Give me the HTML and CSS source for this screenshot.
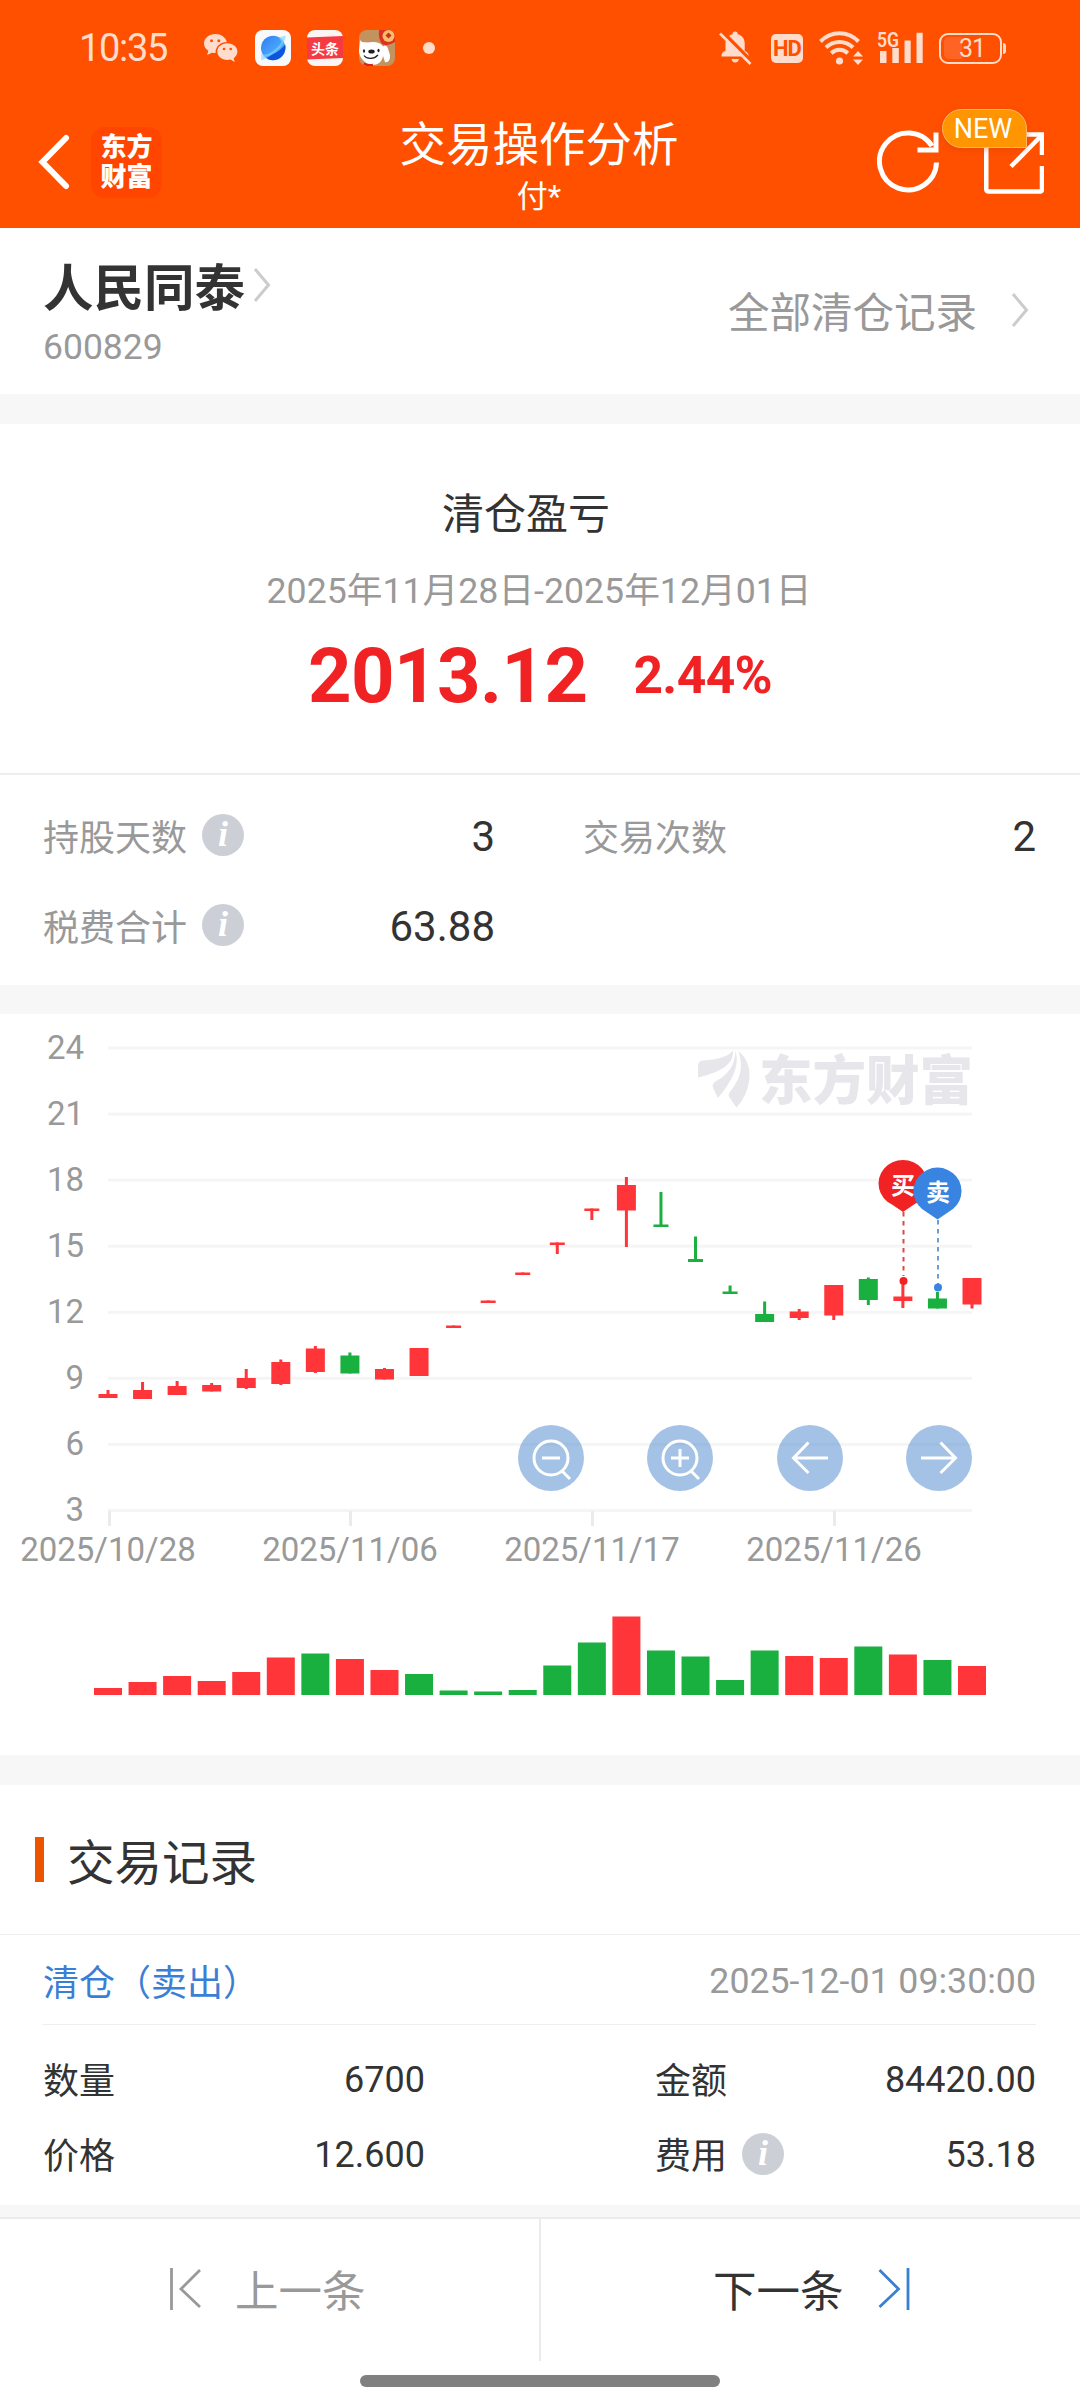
FILE: index.html
```html
<!DOCTYPE html>
<html lang="zh-CN">
<head>
    <meta charset="UTF-8">
    <meta name="viewport" content="width=device-width, initial-scale=1.0">
    <title>交易操作分析</title>
    <link rel="stylesheet" href="styles.css">
</head>
<body>

    <header class="header">
        <!-- Status bar -->
        <div class="status-bar">
            <span class="clock">10:35</span>
            <svg class="wechat" width="34" height="30" viewBox="0 0 34 30">
                <path class="tint" d="M11.500 1C5 1 0 5.200 0 10.500c0 3 1.700 5.600 4.300 7.300L3.200 22l4.600-2.300c1.200.3 2.400.4 3.700.4C11.400 13 16.500 9.200 22.800 9 21.700 4.300 17 1 11.500 1z"/>
                <path class="tint" d="M23.300 10.300c-5.600 0-10 3.600-10 8.300s4.400 8.300 10 8.300c1.200 0 2.300-.2 3.300-.5l4.100 2.500-1-3.700c2.300-1.500 3.700-3.900 3.700-6.600 0-4.700-4.500-8.300-10.100-8.300z"/>
                <g fill="#ff5000"><circle cx="7.500" cy="7.700" r="1.500"/><circle cx="14.800" cy="7.700" r="1.500"/><circle cx="20" cy="16" r="1.300"/><circle cx="26.700" cy="16" r="1.300"/></g>
            </svg>
            <svg class="app-icon" width="36" height="36" viewBox="0 0 36 36">
                <defs>
                    <linearGradient id="sky" x1="0" y1="0" x2="1" y2="1"><stop offset="0" stop-color="#2f7bf5"/><stop offset="1" stop-color="#5cc4ff"/></linearGradient>
                </defs>
                <rect width="36" height="36" rx="8" fill="#f8f9fb"/>
                <circle cx="18.200" cy="18" r="12.200" fill="url(#sky)"/>
                <path d="M30.300 14.500c1.500 8-4 15.700-12 15.700-4 0-6.500-1.500-8.300-3.400C18 25.500 26 20 30.300 14.500z" fill="#0d55de"/>
                <path d="M24 7.500 30.500 5.500c.3 8-10 19.500-24 24.700l-.5-7C8 28 22 21 26.500 12z" fill="#7fd4ff" opacity=".65"/>
            </svg>
            <svg class="app-icon" width="36" height="36" viewBox="0 0 36 36">
                <rect width="36" height="36" rx="8" fill="#fdf5f4"/>
                <path d="M0 7.500 36 6v22L0 29.500z" fill="#f53a43"/>
                <text x="18" y="23.500" class="toutiao-text">头条</text>
            </svg>
            <svg class="app-icon" width="36" height="36" viewBox="0 0 36 36">
                <rect width="36" height="36" rx="8" fill="#c2925f"/>
                <path d="M1 10c2 3 4 2 7 2.500 6-1 13-1 16 4 4-3 5 2 7 8.500.5 5-2 8-5 7l-2-6c-1 6-5 9-11 9-7-.500-13-8-13-14z" fill="#fff"/>
                <ellipse cx="12.500" cy="21.500" rx="3.200" ry="2" fill="#222"/>
                <ellipse cx="5" cy="21" rx="1.100" ry="1.800" fill="#222"/>
                <ellipse cx="19.500" cy="20.500" rx="1.100" ry="1.800" fill="#222"/>
                <path d="M5 25.500c3 4 10 4 14-.500" fill="none" stroke="#222" stroke-width="1.200"/>
                <path d="M5 33.500q4 2.500 9 1.500" fill="none" stroke="#d8261c" stroke-width="2.500"/>
                <path d="M20 0h8q8 0 8 8v4q-8 5-13 2-4-6-3-14z" fill="#e0301e"/>
                <circle cx="29.500" cy="6" r="6" fill="#f7bd6b"/>
                <path d="m29.500 2.500 3 3-3 3-3-3z" fill="#c8321e"/>
            </svg>
            <span class="more-dot"></span>

            <div class="status-right">
                <svg width="33" height="34" viewBox="0 0 33 34">
                    <path class="tint" d="M13.500 3.200a2.600 2.600 0 0 1 5.200 0c4.500 1.200 7 4.600 7 9.300v7.500c2.500 1 4 2.500 4 5.500H2.500c-.2-3.200 1.500-4.700 4-5.700V12.500c0-4.700 2.500-8.100 7-9.300zM12.500 28h7.500q-1 3.500-3.800 3.500T12.500 28z"/>
                    <path d="M3 .500 33 31" stroke="#ff5000" stroke-width="4"/>
                    <path d="M1 2.500 31.500 33" stroke="#ffdccc" stroke-width="2.600"/>
                </svg>
                <span class="hd">HD</span>
                <svg class="wifi" width="45" height="34" viewBox="0 0 45 34">
                    <g fill="none" stroke="#ffdccc" stroke-width="4">
                        <path d="M1.500 10.500C12-.500 29-.500 39.500 10.500"/>
                        <path d="M7 16.500c7.500-7.500 19.500-7.500 27 0"/>
                        <path d="M12.200 22.300c4.800-4.600 11.800-4.600 16.600 0"/>
                    </g>
                    <circle class="tint" cx="20.500" cy="30" r="3.600"/>
                    <path class="tint" d="M34 25.500 39 20l5 5.500zM34 28.500h10L39 34z"/>
                </svg>
                <svg class="signal" width="46" height="34" viewBox="0 0 46 34">
                    <text x="0" y="15.500" class="net-text" textLength="22" lengthAdjust="spacingAndGlyphs">5G</text>
                    <path class="tint" d="M3 20h6.500v12H3zM15.300 17h6.500v15h-6.500zM27.500 9.500h6.200V32h-6.200zM39.500 1.700h6.200V32h-6.200z"/>
                </svg>
                <span class="battery"><span class="battery-level"></span><span class="battery-text">31</span></span>
                <span class="battery-cap"></span>
            </div>
        </div>

        <!-- Title bar -->
        <div class="title-bar">
            <div class="title-left">
                <svg width="32" height="56" viewBox="0 0 32 56"><path d="M28 4 4.500 28 28 52" fill="none" stroke="#fff" stroke-width="6" stroke-linecap="round"/></svg>
                <div class="logo">东方<br>财富</div>
            </div>
            <div class="title-center">
                <h1>交易操作分析</h1>
                <p>付*</p>
            </div>
            <div class="title-right">
                <svg width="64" height="66" viewBox="0 0 64 66" fill="none" stroke="#fff" stroke-width="5">
                    <path d="M59.500 33.500A28.500 28.500 0 1 1 55 17"/>
                    <path d="M59 3.500v17.500H40.500"/>
                </svg>
                <div class="share">
                    <svg width="60" height="66" viewBox="0 0 60 66" fill="none" stroke="#fff" stroke-width="4.500">
                        <path d="M2.250 4.500V60q0 2.500 2.500 2.500H55.500q2.500 0 2.500-2.500V37"/>
                        <path d="M36 5.500h22V26"/>
                        <path d="M27 37.500 57 7"/>
                    </svg>
                    <span class="new-badge">NEW</span>
                </div>
            </div>
        </div>
    </header>

    <!-- Stock -->
    <section class="stock">
        <div>
            <div class="stock-name">人民同泰
                <svg width="18" height="36" viewBox="0 0 18 36"><path d="M2 2l13.500 16L2 34" fill="none" stroke="#ccc" stroke-width="3"/></svg>
            </div>
            <div class="stock-code">600829</div>
        </div>
        <div class="all-records">全部清仓记录
            <svg width="18" height="36" viewBox="0 0 18 36"><path d="M2 2l13.500 16L2 34" fill="none" stroke="#ccc" stroke-width="3"/></svg>
        </div>
    </section>

    <!-- Profit -->
    <section class="profit">
        <h2>清仓盈亏</h2>
        <p class="period">2025年11月28日-2025年12月01日</p>
        <div class="amounts">
            <span class="amount">2013.12</span>
            <span class="percent">2.44%</span>
        </div>
    </section>

    <section class="stats">
        <div class="stat"><span>持股天数</span><i class="info">i</i><b>3</b></div>
        <div class="stat"><span>交易次数</span><b>2</b></div>
        <div class="stat"><span>税费合计</span><i class="info">i</i><b>63.88</b></div>
    </section>

    <!-- K-line and volume, bars are added by script.js -->
    <section class="chart">
        <svg id="chart" width="1080" height="741" viewBox="0 14 1080 741">
            <g id="grid"></g>
            <g class="watermark">
                <path d="M698 66q0-5 5-5.500c14-1 24-3 30-10 .500 11-6 20-35 27z"/>
                <path d="M735.500 51c5 17-6 33-17.500 47l-5-10c-1-4 1-6 5-8 10-6 17-14 17.500-29z"/>
                <path d="M738.500 51.500c7 5 11 14 11 23 0 13-5 24-13 33l-7-10c-2-3 0-5 3-9 8-11 11-22 6-37z"/>
                <text x="759" y="100">东方财富</text>
            </g>
            <g id="candles"></g>
            <g id="volume"></g>

            <!-- Buy / sell pins -->
            <path d="M903.500 212v64" stroke="#d94a4c" stroke-width="2" stroke-dasharray="4.500 4.500"/>
            <circle cx="903.500" cy="281" r="4" fill="#f12224"/>
            <path d="M903 212l-11-7.500a24.500 23.500 0 1 1 22 0z" fill="#f12224"/>
            <text x="903" y="193.500" class="pin-text">买</text>
            <path d="M938 220v64" stroke="#6c9fd0" stroke-width="2" stroke-dasharray="4.500 4.500"/>
            <circle cx="938" cy="287.500" r="4" fill="#3884e0"/>
            <path d="M937.500 219.500l-11-7.500a24 23.500 0 1 1 22 0z" fill="#3884e0"/>
            <text x="938" y="201" class="pin-text">卖</text>

            <!-- Chart buttons -->
            <g class="tool">
                <circle class="tool-bg" cx="551" cy="458" r="33"/>
                <circle cx="551" cy="458" r="17"/><path d="M542 458h18M562 471l8 8"/>
            </g>
            <g class="tool">
                <circle class="tool-bg" cx="680" cy="458" r="33"/>
                <circle cx="680" cy="458" r="17"/><path d="M671 458h18M680 449v18M691 471l8 8"/>
            </g>
            <g class="tool">
                <circle class="tool-bg" cx="810" cy="458" r="33"/>
                <path d="M828 458h-34M808.500 442.500 793.500 458l15 15"/>
            </g>
            <g class="tool">
                <circle class="tool-bg" cx="939" cy="458" r="33"/>
                <path d="M921 458h34M940.500 442.500l15 15.500-15 15"/>
            </g>
        </svg>
    </section>

    <!-- Records -->
    <section class="records">
        <h3>交易记录</h3>
        <div class="record">
            <div class="record-head">
                <span class="record-type">清仓（卖出）</span>
                <span class="record-time">2025-12-01 09:30:00</span>
            </div>
            <div class="record-grid">
                <div class="cell"><span>数量</span><b>6700</b></div>
                <div class="cell"><span>金额</span><b>84420.00</b></div>
                <div class="cell"><span>价格</span><b>12.600</b></div>
                <div class="cell"><span>费用</span><i class="info">i</i><b>53.18</b></div>
            </div>
        </div>
    </section>

    <footer class="footer">
        <div class="pager prev">
            <svg width="32" height="42" viewBox="0 0 32 42"><path d="M1.500 0v42M30 2 11 21l19 18" fill="none" stroke="#999" stroke-width="2.800"/></svg>
            <span>上一条</span>
        </div>
        <div class="pager next">
            <span>下一条</span>
            <svg width="32" height="42" viewBox="0 0 32 42"><path d="M30 0v42M1.500 2l19 19-19 18" fill="none" stroke="#3a80d2" stroke-width="2.800"/></svg>
        </div>
        <div class="home-bar"></div>
    </footer>

    <script src="script.js"></script>
</body>
</html>
```
FILE: styles.css
```css
* {
    box-sizing: border-box;
}

body {
    margin: 0;
    width: 1080px;
    height: 2408px;
    display: flex;
    flex-direction: column;
    background: #f7f7f7;
    color: #333;
    font-family: Roboto, "Noto Sans CJK SC", sans-serif;
    overflow: hidden;
}

h1, h2, h3, p {
    margin: 0;
    font-weight: 400;
}

b {
    font-weight: 400;
}

svg {
    display: block;
    flex: none;
}

section {
    background: #fff;
}

/* Header */
.header {
    height: 228px;
    background: #ff5000;
    color: #fff;
}

.status-bar {
    height: 96px;
    padding-left: 79px;
    display: flex;
    align-items: center;
}

.tint {
    fill: #ffdccc;
}

.clock {
    width: 125px;
    font-size: 38px;
    letter-spacing: -1.3px;
    line-height: 40px;
    color: #ffdccc;
}

.wechat {
    margin-right: 1px;
}

.app-icon {
    margin-left: 16px;
}

.toutiao-text {
    font-size: 14px;
    font-weight: 700;
    fill: #fff;
    text-anchor: middle;
}

.more-dot {
    width: 12px;
    height: 12px;
    margin-left: 28px;
    border-radius: 50%;
    background: #ffdccc;
}

.status-right {
    margin-left: auto;
    margin-right: 74px;
    display: flex;
    align-items: center;
}

.hd {
    width: 32px;
    height: 29px;
    margin: 1px 16px 0 19px;
    border-radius: 5px;
    background: #ffdccc;
    color: #ff5000;
    font-size: 22px;
    font-weight: 700;
    line-height: 29px;
    text-align: center;
    letter-spacing: -1px;
}

.signal {
    margin: 0 16px 0 13px;
    overflow: visible;
}

.net-text {
    font-size: 20px;
    font-weight: 600;
    fill: #ffdccc;
}

.battery {
    width: 63px;
    height: 31px;
    padding: 3px;
    border: 2px solid #ffdccc;
    border-radius: 9px;
    display: flex;
    align-items: center;
}

.battery-level {
    width: 18px;
    height: 22px;
    border-radius: 5px 0 0 5px;
    background: #ff6424;
}

.battery-text {
    margin-left: -3px;
    color: #ffdccc;
    font-size: 25px;
    letter-spacing: -1px;
}

.battery-cap {
    width: 3px;
    height: 11px;
    margin-left: 1px;
    border-radius: 0 3px 3px 0;
    background: #ffdccc;
}

.title-bar {
    height: 132px;
    padding: 0 36px 0 38px;
    display: grid;
    grid-template-columns: 1fr auto 1fr;
}

.title-left {
    height: 132px;
    display: flex;
    align-items: center;
    gap: 21px;
}

.logo {
    width: 71px;
    height: 71px;
    padding-top: 5px;
    border-radius: 14px;
    background: #ff4500;
    font-size: 26px;
    font-weight: 900;
    line-height: 30px;
    text-align: center;
}

.title-center {
    padding: 20px 4px 0 0;
    text-align: center;
}

.title-center h1 {
    font-size: 46.5px;
    line-height: 58px;
}

.title-center p {
    font-size: 31px;
    line-height: 46px;
}

.title-right {
    height: 132px;
    display: flex;
    align-items: center;
    justify-content: flex-end;
    gap: 43px;
}

.share {
    position: relative;
}

.new-badge {
    position: absolute;
    left: -42px;
    top: -20px;
    width: 85px;
    height: 39px;
    padding-right: 3px;
    border: 1px solid #ffb766;
    border-radius: 20px 20px 0 20px;
    background: #ff9500;
    box-shadow: 0 2px 6px rgba(200, 60, 0, 0.3);
    font-size: 27px;
    line-height: 38px;
    text-align: center;
}

/* Stock */
.stock {
    height: 166px;
    padding: 0 51px 0 43px;
    display: flex;
    justify-content: space-between;
}

.stock-name {
    margin-top: 28px;
    display: flex;
    gap: 8px;
    font-size: 50.5px;
    font-weight: 700;
    line-height: 66px;
}

.stock-name svg {
    margin-top: 11px;
}

.stock-code {
    color: #999;
    font-size: 35.5px;
    line-height: 50px;
}

.all-records {
    height: 164px;
    display: flex;
    align-items: center;
    gap: 34px;
    color: #999;
    font-size: 41.5px;
}

/* Profit */
.profit {
    height: 349px;
    margin-top: 30px;
    padding-top: 59px;
    text-align: center;
}

.profit h2 {
    padding-right: 28px;
    font-size: 42px;
    line-height: 64px;
}

.period {
    margin-top: 17px;
    padding-right: 2px;
    color: #999;
    font-size: 35.7px;
    line-height: 54px;
}

.amounts {
    margin-top: 9px;
    display: flex;
    align-items: center;
    justify-content: center;
    gap: 46px;
    color: #f12224;
    font-weight: 700;
    line-height: 98px;
    letter-spacing: -0.6px;
}

.amount {
    font-size: 76px;
}

.percent {
    font-size: 51.5px;
}

.stats {
    height: 212px;
    padding: 16px 44px 0 43px;
    border-top: 2px solid #eee;
    display: grid;
    grid-template-columns: 452px 453px;
    grid-auto-rows: 90px;
    column-gap: 88px;
}

.stat,
.cell {
    display: flex;
    align-items: center;
}

.stat span,
.cell span {
    padding-bottom: 3px;
}

.stat {
    color: #999;
    font-size: 36px;
}

.stat b {
    margin-left: auto;
    color: #333;
    font-size: 42px;
}

.info {
    width: 42px;
    height: 42px;
    margin: -2px 0 0 15px;
    border-radius: 50%;
    background: #cccfd6;
    color: #fff;
    font-family: "Liberation Serif", serif;
    font-size: 36px;
    font-weight: 700;
    line-height: 41px;
    text-align: center;
}

/* Chart */
.chart {
    margin: 29px 0 30px;
}

.axis-text {
    font-size: 33px;
    fill: #999;
}

.watermark {
    fill: #e6e6eb;
    font-family: "Noto Sans CJK SC", sans-serif;
    font-size: 53.5px;
    font-weight: 900;
}

.pin-text {
    font-size: 24px;
    font-weight: 700;
    fill: #fff;
    text-anchor: middle;
}

.tool {
    fill: none;
    stroke: #fff;
    stroke-width: 3;
}

.tool-bg {
    fill: #4a86cb;
    fill-opacity: 0.5;
    stroke: none;
}

/* Records */
.records {
    height: 420px;
}

.records h3 {
    height: 150px;
    padding-left: 35px;
    border-bottom: 1px solid #eee;
    display: flex;
    align-items: center;
    gap: 23px;
    font-size: 47.5px;
}

.records h3::before {
    content: "";
    width: 9px;
    height: 45px;
    background: #eb5500;
}

.record {
    margin: 0 44px 0 43px;
    font-size: 36px;
}

.record-head {
    height: 90px;
    border-bottom: 1px solid #eee;
    display: flex;
    align-items: center;
    justify-content: space-between;
}

.record-type {
    color: #3a7fd5;
}

.record-time {
    padding-top: 3px;
    color: #999;
    font-size: 35.7px;
}

.record-grid {
    padding-top: 17px;
    display: grid;
    grid-template-columns: 382px 381px;
    grid-auto-rows: 75px;
    justify-content: space-between;
}

.cell b {
    margin-left: auto;
}

/* Footer */
.footer {
    height: 191px;
    margin-top: 12px;
    border-top: 2px solid #ebebeb;
    background: #fff;
    display: grid;
    grid-template-columns: 1fr 1fr;
    grid-template-rows: 142px 1fr;
    justify-items: center;
}

.pager {
    width: 100%;
    display: flex;
    align-items: center;
    font-size: 43.5px;
}

.pager span {
    padding-bottom: 4px;
}

.pager svg {
    margin-top: -2px;
}

.prev {
    padding-left: 170px;
    gap: 33px;
    border-right: 1px solid #ebebeb;
    color: #999;
}

.next {
    padding-left: 172px;
    gap: 34px;
    border-left: 1px solid #ebebeb;
}

.home-bar {
    grid-column: 1 / 3;
    width: 360px;
    height: 12px;
    margin-top: 14px;
    border-radius: 6px;
    background: #808080;
}
```
FILE: script.js
```js
const RED = '#ff3539';
const GREEN = '#1ab040';

// candle color, body top, body bottom, wick top, wick bottom, volume top
const days = [
    ['r', 394, 398, 390, 398, 688],
    ['r', 390, 399, 382, 399, 682],
    ['r', 386, 395, 381, 395, 676],
    ['r', 385, 391.5, 383, 391.5, 681],
    ['r', 378, 388, 369, 389, 672],
    ['r', 362, 384, 359.5, 385, 657.5],
    ['r', 348.5, 372, 346, 373, 653.5],
    ['g', 355.5, 373.5, 352.5, 373.5, 659],
    ['r', 369, 379.5, 368, 379.5, 670],
    ['r', 348, 376, 348, 376, 674],
    ['r', 325.5, 328, 325.5, 328, 690.5],
    ['r', 300.5, 303, 300.5, 303, 691.5],
    ['r', 272.5, 275, 272.5, 275, 690],
    ['r', 242.5, 245, 242.5, 254, 665.5],
    ['r', 208.5, 211, 208.5, 220, 642.5],
    ['r', 185, 210.5, 177, 247, 616.5],
    ['g', 224.5, 227, 192, 227, 650.5],
    ['g', 259, 262, 236.5, 262, 656.5],
    ['g', 291.5, 294, 285.5, 294, 680],
    ['g', 314, 322, 301.5, 322, 650.5],
    ['r', 311.5, 318, 309, 320, 656],
    ['r', 285, 315.5, 285, 320, 658],
    ['g', 279, 300, 277.5, 305, 646.5],
    ['r', 296.5, 301, 284.5, 308, 654.5],
    ['g', 298.5, 308.5, 292, 308.5, 660],
    ['r', 278, 304.5, 278, 308.5, 666]
];
// volume bars have their own colors
const volumeColors = 'rrrrrrgrrggggggrggggrrgrgr';

const rect = (x, y, w, h, fill) =>
    `<rect x="${x}" y="${y}" width="${w}" height="${h}" fill="${fill}"/>`;

let grid = '';
[24, 21, 18, 15, 12, 9, 6, 3].forEach((price, i) => {
    const y = 48 + i * 66.06;
    grid += rect(108, y - 1.5, 864, 3, '#f5f5f5');
    grid += `<text class="axis-text" x="84" y="${y + 10.5}" text-anchor="end">${price}</text>`;
});
[['2025/10/28', 108], ['2025/11/06', 350], ['2025/11/17', 592], ['2025/11/26', 834]].forEach(([date, x]) => {
    grid += rect(x === 108 ? x : x - 1, 511, 3, 15, '#ebebeb');
    grid += `<text class="axis-text" x="${x}" y="561" text-anchor="middle">${date}</text>`;
});
document.getElementById('grid').innerHTML = grid;

let candles = '';
let volume = '';
days.forEach(([c, top, bottom, high, low, vol], i) => {
    const x = 108 + i * 34.56;
    const color = c === 'r' ? RED : GREEN;
    const w = bottom - top < 3.5 ? 15 : 19;
    candles += rect(x - w / 2, top, w, bottom - top, color);
    candles += rect(x - 1.5, high, 3, low - high, color);
    volume += rect(x - 14, vol, 28, 695 - vol, volumeColors[i] === 'r' ? RED : GREEN);
});
document.getElementById('candles').innerHTML = candles;
document.getElementById('volume').innerHTML = volume;
```
